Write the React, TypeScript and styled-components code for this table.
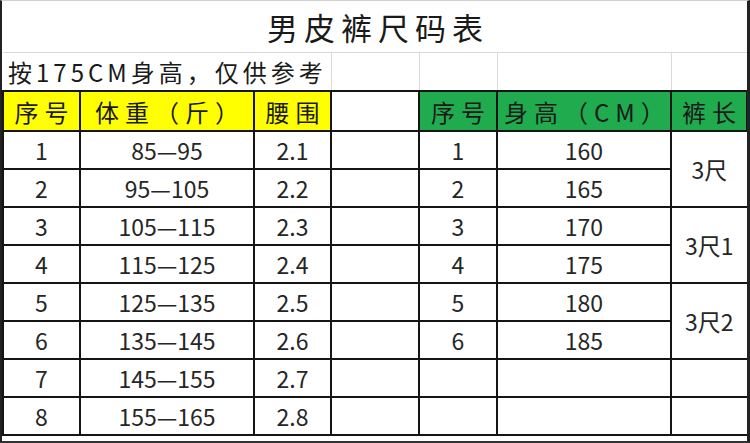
import styled, { createGlobalStyle } from "styled-components";

const GlobalStyle = createGlobalStyle`
  html, body {
    margin: 0;
    padding: 0;
    background: #fff;
  }
  body {
    font-family: "Noto Sans CJK SC", "Noto Sans", sans-serif;
    color: #1a1a1a;
  }
`;

const Sheet = styled.div`
  width: 750px;
  height: 443px;
  box-sizing: border-box;
  border-top: 1px solid #d0d0d0;
  border-left: 2px solid #222;
  border-right: 3px solid #222;
  border-bottom: 2px solid #333;
  padding: 0 1px 1px 0;
  overflow: hidden;
  background: #fff;
`;

const Table = styled.table`
  width: 744px;
  border-collapse: collapse;
  table-layout: fixed;
  td {
    padding: 0;
    box-sizing: border-box;
  }
`;

const TitleCell = styled.td`
  height: 51px;
  text-align: center;
  font-size: 31px;
  letter-spacing: 6px;
  text-indent: 6px;
  border-bottom: 1px solid #d9d9d9;
`;

const NoteCell = styled.td`
  height: 39px;
  font-size: 24px;
  letter-spacing: 4px;
  padding-left: 5px !important;
  white-space: nowrap;
  border-right: 1px solid #d9d9d9;
`;

const GridCell = styled.td`
  border-left: 1px solid #d9d9d9;
  border-right: 1px solid #d9d9d9;
`;

const HeadCell = styled.td<{ $bg: string }>`
  height: 40px;
  background: ${(props) => props.$bg};
  border: 2px solid #151515;
  text-align: center;
  font-size: 24px;
  letter-spacing: 6px;
  text-indent: 6px;
  white-space: nowrap;
`;

const Cell = styled.td<{ $last?: boolean }>`
  height: 38px;
  border: 2px solid #151515;
  ${(props) => (props.$last ? "border-right: 1px solid #8a8a8a;" : "")}
  text-align: center;
  font-size: 23px;
  color: #262626;
  white-space: nowrap;
`;

const weights = [
  ["85—95", "2.1"],
  ["95—105", "2.2"],
  ["105—115", "2.3"],
  ["115—125", "2.4"],
  ["125—135", "2.5"],
  ["135—145", "2.6"],
  ["145—155", "2.7"],
  ["155—165", "2.8"],
];

const heights = ["160", "165", "170", "175", "180", "185"];
const lengths = ["3尺", "3尺1", "3尺2"];

const widths = [77, 174, 77, 88, 78, 174, 76];

export default function App() {
  return (
    <>
      <GlobalStyle />
      <Sheet>
        <Table>
          <colgroup>
            {widths.map((w, i) => (
              <col key={i} style={{ width: w }} />
            ))}
          </colgroup>
          <tbody>
            <tr>
              <TitleCell colSpan={7}>男皮裤尺码表</TitleCell>
            </tr>
            <tr>
              <NoteCell colSpan={3}>按175CM身高，仅供参考</NoteCell>
              <GridCell />
              <GridCell />
              <GridCell />
              <GridCell />
            </tr>
            <tr>
              <HeadCell $bg="#ffff00">序号</HeadCell>
              <HeadCell $bg="#ffff00">体重（斤）</HeadCell>
              <HeadCell $bg="#ffff00">腰围</HeadCell>
              <HeadCell $bg="#ffffff" />
              <HeadCell $bg="#1fab4e">序号</HeadCell>
              <HeadCell $bg="#1fab4e">身高（CM）</HeadCell>
              <HeadCell $bg="#1fab4e">裤长</HeadCell>
            </tr>
            {weights.map(([w, waist], i) => (
              <tr key={i}>
                <Cell>{i + 1}</Cell>
                <Cell>{w}</Cell>
                <Cell>{waist}</Cell>
                <Cell />
                <Cell>{i < 6 ? i + 1 : ""}</Cell>
                <Cell>{heights[i] ?? ""}</Cell>
                {i < 6 && i % 2 === 0 && (
                  <Cell $last rowSpan={2}>
                    {lengths[i / 2]}
                  </Cell>
                )}
                {i >= 6 && <Cell $last />}
              </tr>
            ))}
          </tbody>
        </Table>
      </Sheet>
    </>
  );
}
